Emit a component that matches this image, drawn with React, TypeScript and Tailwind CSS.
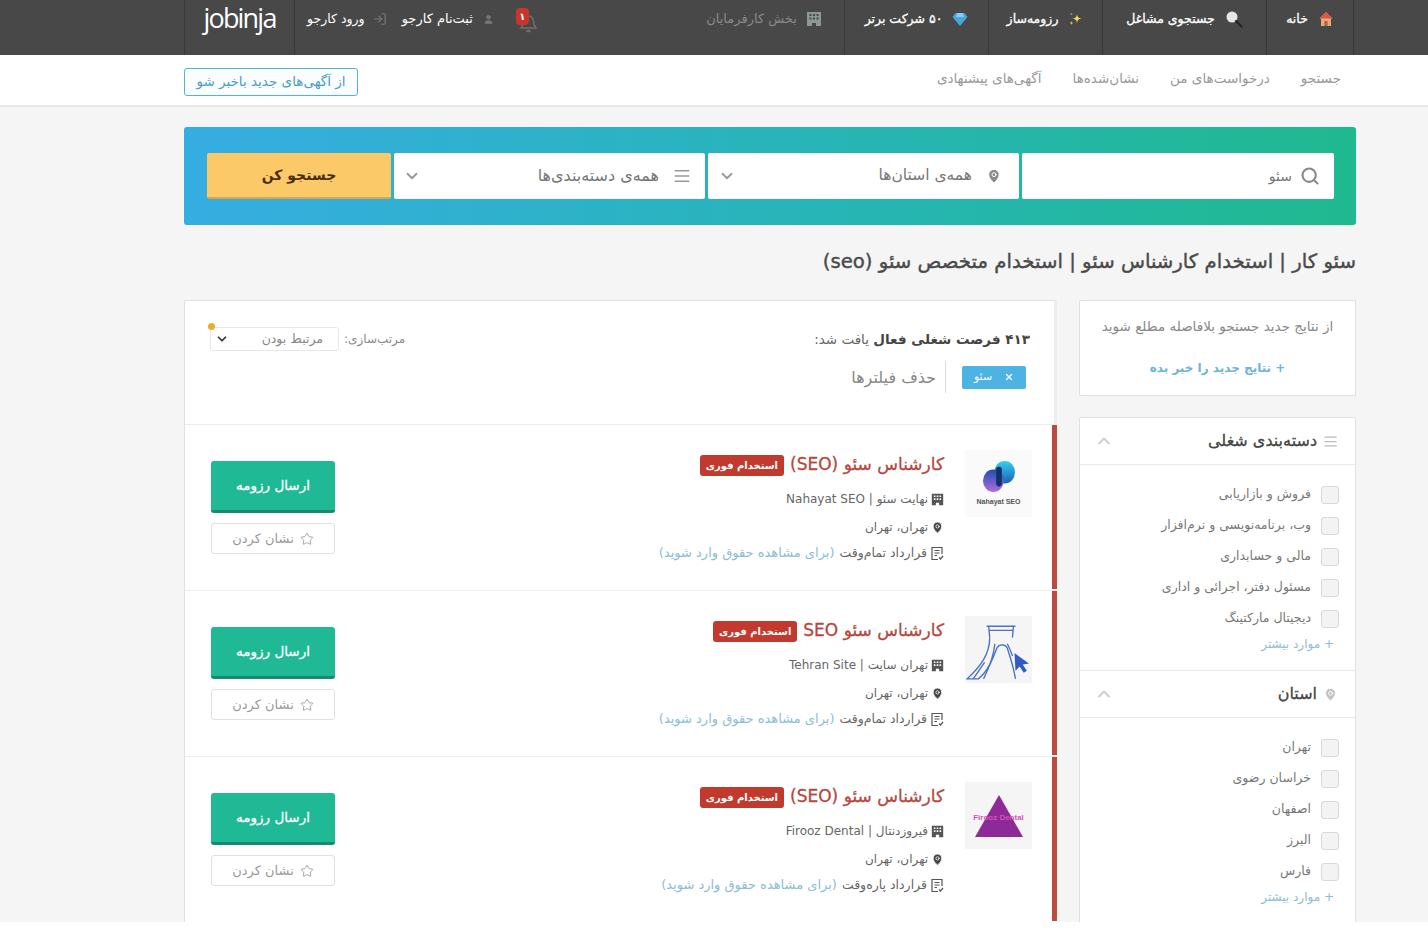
import React from 'react';
import { AlignJustify, ChevronDown, ChevronUp, LogIn, MapPin, Search, Star, User, X } from 'lucide-react';

const categories = ['فروش و بازاریابی', 'وب،‌ برنامه‌نویسی و نرم‌افزار', 'مالی و حسابداری', 'مسئول دفتر، اجرائی و اداری', 'دیجیتال مارکتینگ'];
const provinces = ['تهران', 'خراسان رضوی', 'اصفهان', 'البرز', 'فارس'];

const HomeIcon = () => (
  <svg width="16" height="16" viewBox="0 0 16 16">
    <path d="M8 1 1.5 7.5H3V15h10V7.5h1.5z" fill="#e8a77c" />
    <path d="M8 1 1.5 7.5h13z" fill="#d9583f" />
    <rect x="6.5" y="10" width="3" height="5" fill="#a5673f" />
  </svg>
);

const GlassIcon = () => (
  <svg width="18" height="18" viewBox="0 0 18 18">
    <circle cx="7" cy="7" r="5.5" fill="#e6e6e6" />
    <path d="m11 11 5.5 5.5" stroke="#222" strokeWidth="2" strokeLinecap="round" />
  </svg>
);

const SparkleIcon = () => (
  <svg width="16" height="16" viewBox="0 0 16 16">
    <path d="M9 3c.4 3 1.4 4 4.5 4.5C10.400 8 9.400 9 9 12.500 8.600 9 7.600 8 4.500 7.500 7.600 7 8.600 6 9 3z" fill="#f2d35a" />
    <path d="M3.500 10c.2 1.300.7 1.800 2 2-1.300.2-1.800.7-2 2-.2-1.300-.7-1.800-2-2 1.300-.2 1.800-.7 2-2z" fill="#e9c84a" />
    <path d="M3.500 1.500c.1 1 .5 1.400 1.500 1.500-1 .1-1.400.5-1.500 1.500C3.400 3.500 3 3.100 2 3c1-.1 1.400-.5 1.500-1.500z" fill="#8fb5c9" />
  </svg>
);

const DiamondIcon = () => (
  <svg width="16" height="16" viewBox="0 0 16 16">
    <path d="M3.500 2h9L15.500 6 8 15 .5 6z" fill="#4aa6dd" />
    <path d="M5.500 2h5L12 6H4z" fill="#8bd0f2" />
  </svg>
);

const BuildingIcon = ({ color = '#8d9795', size = 16 }: { color?: string; size?: number }) => (
  <svg width={size} height={size} viewBox="0 0 16 16">
    <path fillRule="evenodd" d="M1 1h14v14h-5v-3H6v3H1zm2.500 2v2h2V3zm3.500 0v2h2V3zm3.500 0v2h2V3zm-7 3.500v2h2v-2zm3.500 0v2h2v-2zm3.500 0v2h2v-2z" fill={color} />
  </svg>
);

const BellIcon = () => (
  <span className="relative block w-[22px] h-[30px]">
    <svg className="absolute left-[3px] top-[9px]" width="19" height="21" viewBox="0 0 19 21" fill="none" stroke="#6f6f6f" strokeWidth="1.500">
      <path d="M2 15c2-2 2-4 2.500-7 .5-3 2.500-5 5-5s4.500 2 5 5c.5 3 .5 5 2.500 7z" />
      <path d="M7.500 18h4" strokeWidth="2.500" />
    </svg>
    <span className="absolute left-0 top-[4px] w-[13px] h-[17px] rounded-[4px] bg-[#c8352f] text-white text-[10px] leading-[17px] font-bold text-center">۱</span>
  </span>
);

const ContractIcon = () => (
  <svg width="14" height="15" viewBox="0 0 14 15" fill="none" stroke="#555" strokeWidth="1.200">
    <path d="M12 8V1.500H2v12h6" />
    <path d="M4.500 4.500h5M4.500 7h5M4.500 9.500h2.500" />
    <path d="m9 11.500 1.500 1.500 2.500-3" />
  </svg>
);

const NahayatLogo = () => (
  <div className="w-[67px] h-[67px] bg-[#fafafa] flex flex-col items-center pt-[11px]">
    <svg width="34" height="32" viewBox="0 0 36 34">
      <defs>
        <linearGradient id="nahayat-a" x1="0" y1="0" x2="0" y2="1">
          <stop offset="0" stopColor="#35d0ee" />
          <stop offset="1" stopColor="#1a5fb4" />
        </linearGradient>
        <linearGradient id="nahayat-b" x1="0" y1="0" x2="0" y2="1">
          <stop offset="0" stopColor="#1e4fa8" />
          <stop offset="1" stopColor="#b26be0" />
        </linearGradient>
      </defs>
      <ellipse cx="24" cy="12" rx="11" ry="12" fill="url(#nahayat-a)" />
      <ellipse cx="12" cy="21" rx="11" ry="12" fill="url(#nahayat-b)" />
      <rect x="15" y="6" width="6" height="21" rx="3" fill="#12306e" />
    </svg>
    <span className="text-[7px] leading-[10px] mt-[4px] font-bold text-[#555] font-['Liberation_Sans',sans-serif]" dir="ltr">Nahayat SEO</span>
  </div>
);

const TehranLogo = () => (
  <div className="w-[67px] h-[67px] bg-[#f5f5f5] flex items-center justify-center">
    <svg width="66" height="62" viewBox="0 0 64 60" fill="none" stroke="#4b6fc4" strokeWidth="1.300">
      <path d="M20 7h28M22 7l1 11M46 7l-1 11M23 11h22" />
      <path d="M23 18c0 16-9 28-22 40h11c10-8 14-20 18-30 2-4 8-4 10 0 2 6 6 18 8 30" />
      <path d="M28 24c-1 12-6 24-11 34M18 42 7 58M40 24c2 4 4 8 5 12" />
      <path d="M47 33l14 10-6 1 4 6-3 2-4-6-4 4z" fill="#2f5bc8" stroke="none" />
    </svg>
  </div>
);

const FiroozLogo = () => (
  <div className="relative w-[67px] h-[67px] bg-[#f5f5f5] flex items-center justify-center">
    <svg width="50" height="44" viewBox="0 0 50 44">
      <path d="M25 1 49 43H1z" fill="#8e2a97" />
    </svg>
    <span className="absolute left-0 right-0 top-[31px] text-center text-[8px] leading-[10px] font-bold text-[#d653b8] font-['Liberation_Sans',sans-serif]" dir="ltr">Firooz Dental</span>
  </div>
);

const jobs = [
  { title: 'کارشناس سئو (SEO)', company: 'نهایت سئو | Nahayat SEO', contract: 'قرارداد تمام‌وقت', logo: <NahayatLogo /> },
  { title: 'کارشناس سئو SEO', company: 'تهران سایت | Tehran Site', contract: 'قرارداد تمام‌وقت', logo: <TehranLogo /> },
  { title: 'کارشناس سئو (SEO)', company: 'فیروزدنتال | Firooz Dental', contract: 'قرارداد پاره‌وقت', logo: <FiroozLogo /> },
];

const TopNavItem = ({ icon, label, width }: { icon: React.ReactNode; label: string; width: string }) => (
  <a className={`h-full flex items-center justify-center gap-[10px] border-l border-[#383838] text-white text-[12.5px] [-webkit-text-stroke:0.3px] pb-[17px] ${width}`}>
    {icon}
    <span>{label}</span>
  </a>
);

const JobRow = ({ job }: { job: (typeof jobs)[number] }) => (
  <div className="h-[166px] shrink-0 border-b border-[#ececec] bg-white flex">
    <div className="w-[5px] shrink-0 bg-[#bb4a3f] mb-[1px]" />
    <div className="flex-1 flex pr-[20px] pl-[26px] pt-[25px]">
      <div className="shrink-0">{job.logo}</div>
      <div className="flex-1 pr-[21px] pt-[2px]">
        <div className="flex items-center gap-[6px] h-[26px]">
          <h3 className="text-[17px] [-webkit-text-stroke:0.3px] text-[#b5473e]">{job.title}</h3>
          <span className="bg-[#c23a2d] text-white text-[10px] font-bold rounded-[3px] px-[6px] h-[21px] leading-[21px]">استخدام فوری</span>
        </div>
        <div className="flex items-center gap-[3px] text-[12px] text-[#666] mt-[12px] h-[18px]">
          <BuildingIcon color="#555" size={13} />
          <span>{job.company}</span>
        </div>
        <div className="flex items-center gap-[3px] text-[12px] text-[#666] mt-[10px] h-[18px]">
          <MapPin size={13} fill="#444" stroke="#fff" strokeWidth={1.500} />
          <span>تهران، تهران</span>
        </div>
        <div className="flex items-center gap-[3px] text-[12.5px] text-[#666] mt-[8px] h-[18px]">
          <ContractIcon />
          <span>{job.contract}</span>
          <span className="text-[#8cbdd6] text-[13px] mr-[2px]">(برای مشاهده حقوق وارد شوید)</span>
        </div>
      </div>
      <div className="w-[124px] shrink-0 pt-[11px]">
        <button className="w-full h-[52px] rounded-[3px] bg-[#1fb996] border-b-[3px] border-[#178a70] text-white text-[13.5px] [-webkit-text-stroke:0.3px]">ارسال رزومه</button>
        <button className="w-full h-[31px] mt-[10px] rounded-[3px] bg-white border border-[#e1e1e1] text-[#999] text-[13px] flex items-center justify-center gap-[6px]">
          <Star size={14} strokeWidth={1.500} />
          نشان کردن
        </button>
      </div>
    </div>
  </div>
);

const FilterList = ({ items }: { items: string[] }) => (
  <div className="pt-[14px] pr-[16px]">
    {items.map((item) => (
      <label key={item} className="flex items-center gap-[10px] h-[31px] text-[12.5px] text-[#777]">
        <span className="w-[18px] h-[18px] shrink-0 rounded-[3px] bg-[#f3f3f3] border border-[#d8d8d8]" />
        {item}
      </label>
    ))}
    <a className="block text-[12px] text-[#8cbdd6] pr-[5px] h-[21px] leading-[21px]">+ موارد بیشتر</a>
  </div>
);

const FilterHeader = ({ icon, label }: { icon: React.ReactNode; label: string }) => (
  <div className="h-[47px] border-b border-[#e9e9e9] flex items-center justify-between pr-[17px] pl-[14px]">
    <div className="flex items-center gap-[6px]">
      {icon}
      <span className="text-[16px] [-webkit-text-stroke:0.3px] text-[#444]">{label}</span>
    </div>
    <ChevronUp size={20} strokeWidth={2.500} className="text-[#cfcfcf]" />
  </div>
);

export default function App() {
  return (
    <div dir="rtl" className="w-[1428px] h-[943px] overflow-hidden bg-white font-['DejaVu_Sans','Noto_Sans',sans-serif]">
      <div className="h-[922px] overflow-hidden bg-[#f5f5f5]">
        <header className="h-[55px] bg-[#484848] pl-[184px] pr-[74px] flex items-stretch">
          <TopNavItem icon={<HomeIcon />} label="خانه" width="w-[88px] border-r" />
          <TopNavItem icon={<GlassIcon />} label="جستجوی مشاغل" width="w-[164px]" />
          <TopNavItem icon={<SparkleIcon />} label="رزومه‌ساز" width="w-[114px]" />
          <TopNavItem icon={<DiamondIcon />} label="۵۰ شرکت برتر" width="w-[144px]" />
          <a className="w-[160px] flex items-center justify-center gap-[9px] text-[#8a8a8a] text-[13px] pb-[17px]">
            <BuildingIcon />
            بخش کارفرمایان
          </a>
          <div className="mr-auto flex items-stretch">
            <div className="flex items-center pb-[17px] pl-[22px]"><BellIcon /></div>
            <div className="flex items-center gap-[10px] text-white text-[13px] pb-[17px] pl-[15px]">
              <User size={11} fill="#777" stroke="#777" />
              <span>ثبت‌نام کارجو</span>
            </div>
            <div className="flex items-center gap-[8px] text-white text-[12.5px] pb-[17px] pl-[12px]">
              <LogIn size={14} className="text-[#777]" />
              <span>ورود کارجو</span>
            </div>
            <div className="w-[111px] border-x border-[#383838] flex items-center justify-center pb-[19px]">
              <span dir="ltr" className="text-white text-[27px] leading-[30px] tracking-[-1.800px] font-['Open_Sans',sans-serif]">jobinja</span>
            </div>
          </div>
        </header>

        <nav className="h-[52px] bg-white border-b-2 border-[#e6e6e6] pl-[184px] pr-[87px] flex items-center text-[13.5px] text-[#999]">
          <div className="flex items-center gap-[31px] pb-[3px]">
            <a>جستجو</a>
            <a>درخواست‌های من</a>
            <a>نشان‌شده‌ها</a>
            <a>آگهی‌های پیشنهادی</a>
          </div>
          <a className="mr-auto mt-[3px] h-[28px] w-[174px] rounded-[3px] border border-[#54b3cf] bg-[#f9fdfe] text-[#4f9cc3] text-[13.5px] flex items-center justify-center">از آگهی‌های جدید باخبر شو</a>
        </nav>

        <main className="pl-[184px] pr-[72px]">
          <section className="mt-[20px] h-[98px] rounded-[3px] bg-gradient-to-l from-[#1fb98f] to-[#36ade2] pr-[22px] pl-[23px] flex items-center gap-[3px]">
            <div className="w-[312px] h-[46px] rounded-[2px] bg-white flex items-center gap-[8px] pr-[14px] text-[14px] text-[#777]">
              <Search size={20} strokeWidth={2.500} className="text-[#888]" />
              سئو
            </div>
            <div className="w-[311px] h-[46px] rounded-[2px] bg-white flex items-center pr-[17px] pl-[10px] text-[15.5px] text-[#777]">
              <MapPin size={16} fill="#8b8b8b" stroke="#fff" strokeWidth={1.500} />
              <span className="mr-[14px]">همه‌ی استان‌ها</span>
              <ChevronDown size={18} strokeWidth={2.500} className="mr-auto text-[#999]" />
            </div>
            <div className="w-[311px] h-[46px] rounded-[2px] bg-white flex items-center pr-[14px] pl-[9px] text-[16px] text-[#777]">
              <AlignJustify size={18} className="text-[#999]" />
              <span className="mr-[14px]">همه‌ی دسته‌بندی‌ها</span>
              <ChevronDown size={18} strokeWidth={2.500} className="mr-auto text-[#999]" />
            </div>
            <button className="w-[184px] h-[46px] rounded-[2px] bg-[#fcc969] border-b-2 border-[#d9a750] text-[#4a2c0a] text-[14px] font-bold">جستجو کن</button>
          </section>

          <h1 className="mt-[23px] h-[27px] leading-[28px] text-[19.7px] font-normal [-webkit-text-stroke:0.4px] text-[#4a4a4a]">سئو کار | استخدام کارشناس سئو | استخدام متخصص سئو (seo)</h1>

          <div className="mt-[25px] flex items-start gap-[22px]">
            <aside className="w-[277px] shrink-0">
              <div className="h-[96px] rounded-[2px] bg-white border border-[#e0e0e0] text-center">
                <p className="text-[#888] text-[13.5px] mt-[15px]">از نتایج جدید جستجو بلافاصله مطلع شوید</p>
                <a className="block text-[#6fb3d6] text-[12px] font-semibold mt-[23px]">+ نتایج جدید را خبر بده</a>
              </div>
              <div className="mt-[21px] rounded-[2px] bg-white border border-[#e0e0e0] h-[540px]">
                <FilterHeader icon={<AlignJustify size={15} className="text-[#bbb]" />} label="دسته‌بندی شغلی" />
                <div className="h-[206px] border-b border-[#e9e9e9]">
                  <FilterList items={categories} />
                </div>
                <FilterHeader icon={<MapPin size={15} fill="#c4c4c4" stroke="#fff" strokeWidth={1.500} />} label="استان" />
                <FilterList items={provinces} />
              </div>
            </aside>

            <section className="w-[873px] shrink-0 bg-white border-l border-t border-[#e0e0e0] rounded-[2px]">
              <div className="h-[124px] border-b border-[#ececec] border-r-[3px] border-r-[#eeeeee] relative pr-[24px] pl-[25px] pt-[25px]">
                <div className="flex items-center justify-between h-[26px]">
                  <p className="text-[13.5px] text-[#666]">
                    <b className="font-bold text-[#444]">۴۱۳ فرصت شغلی فعال</b> یافت شد:
                  </p>
                  <div className="flex items-center gap-[5px] text-[12px] text-[#888]">
                    <span>مرتب‌سازی:</span>
                    <div className="w-[129px] h-[24px] rounded-[3px] border border-[#e8e8e8] flex items-center pr-[15px] pl-[4px] text-[12.5px] text-[#888]">
                      مرتبط بودن
                      <ChevronDown size={14} strokeWidth={3} className="mr-auto text-[#333]" />
                    </div>
                  </div>
                </div>
                <span className="absolute left-[23px] top-[22px] w-[7px] h-[7px] rounded-full bg-[#efab30]" />
                <div className="flex items-center mt-[9px] mr-[4px] h-[32px]">
                  <span className="w-[64px] h-[23px] rounded-[2px] bg-[#4db3e3] text-white text-[11px] flex items-center justify-center gap-[12px]">
                    <X size={10} strokeWidth={3} />
                    سئو
                  </span>
                  <span className="h-[32px] mr-[16px] pr-[9px] border-r border-[#dcdcdc] leading-[34px] text-[16px] text-[#888]">حذف فیلترها</span>
                </div>
              </div>
              {jobs.map((job, i) => (
                <JobRow key={i} job={job} />
              ))}
            </section>
          </div>
        </main>
      </div>
    </div>
  );
}
